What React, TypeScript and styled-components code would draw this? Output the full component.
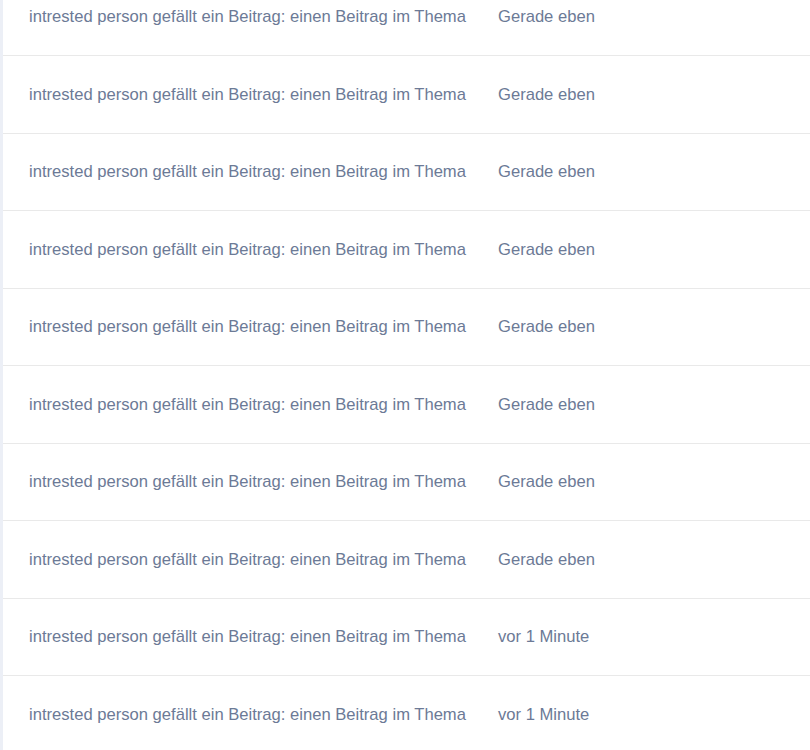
import styled, { createGlobalStyle } from "styled-components";

const GlobalStyle = createGlobalStyle`
  body {
    margin: 0;
    background: #fff;
    font-family: "Liberation Sans", Arial, sans-serif;
    overflow: hidden;
  }
`;

const List = styled.div`
  margin-top: -21.5px;
  border-left: 3px solid #eceff6;
  min-height: 800px;
`;

const Row = styled.div`
  display: grid;
  grid-template-columns: 469px 1fr;
  align-items: center;
  box-sizing: border-box;
  height: 77.5px;
  padding-left: 26px;
  padding-top: 1px;
  border-bottom: 1px solid #e9e9e9;
  font-size: 16.6px;
  color: #6c7a96;
`;

const Message = styled.div`
  white-space: nowrap;
`;

const Time = styled.div`
  white-space: nowrap;
`;

const times = [
  "Gerade eben",
  "Gerade eben",
  "Gerade eben",
  "Gerade eben",
  "Gerade eben",
  "Gerade eben",
  "Gerade eben",
  "Gerade eben",
  "vor 1 Minute",
  "vor 1 Minute",
];

function App() {
  return (
    <>
      <GlobalStyle />
      <List>
        {times.map((time, i) => (
          <Row key={i}>
            <Message>
              intrested person gefällt ein Beitrag: einen Beitrag im Thema
            </Message>
            <Time>{time}</Time>
          </Row>
        ))}
      </List>
    </>
  );
}

export default App;
